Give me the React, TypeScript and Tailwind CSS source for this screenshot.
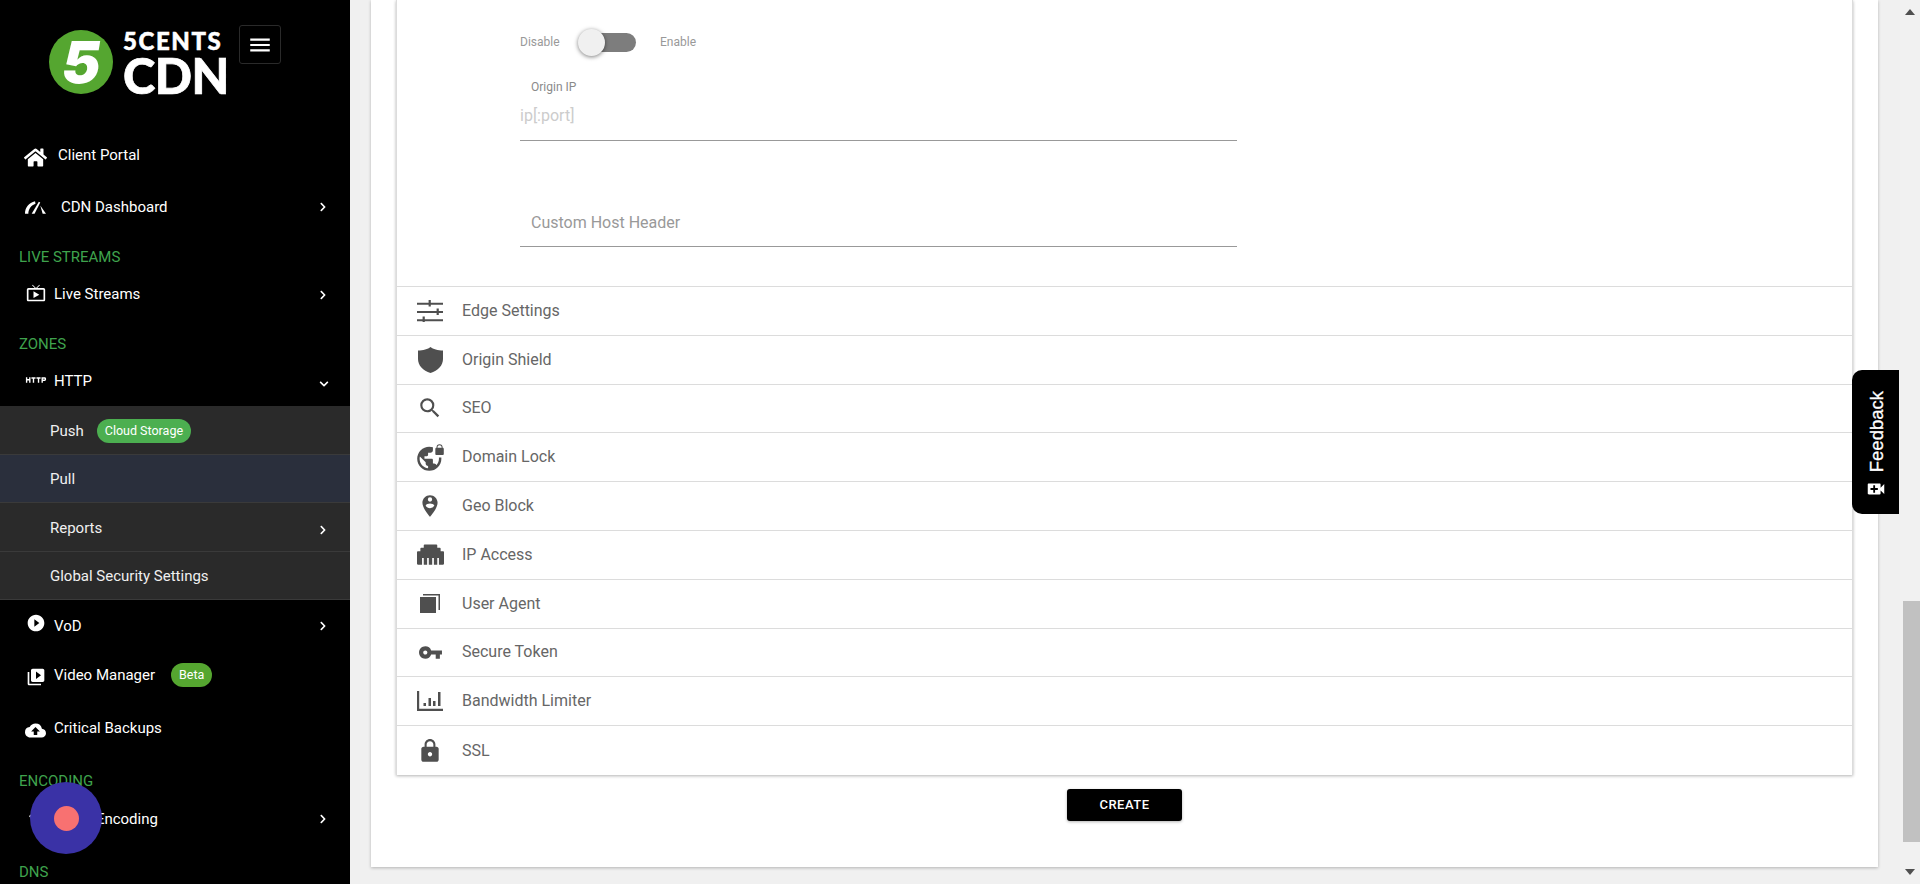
import type { ReactNode } from "react";
import { FaHome, FaEthernet, FaChevronRight, FaChevronDown } from "react-icons/fa";
import {
  MdSearch,
  MdVpnLock,
  MdPersonPinCircle,
  MdVpnKey,
  MdLock,
  MdOutlineLiveTv,
  MdPlayCircleFilled,
  MdVideoLibrary,
  MdCloudUpload,
  MdHttp,
  MdVideoCall,
  MdMenu,
} from "react-icons/md";

function GaugeIcon() {
  return (
    <svg viewBox="0 0 22 13" className="w-[21px] h-[13px]" fill="currentColor">
      <path d="M0 13C0 6.500 4 1.500 10.500 0l.5 2.500C6.500 4 3.500 8 3.500 13z" />
      <path d="M14.500 0.500 16 1.200 10 13H7z" />
      <path d="M16 4.500 22 13h-3.500z" />
    </svg>
  );
}

function TuneIcon() {
  return (
    <svg viewBox="0 0 26 22" className="w-[26px] h-[22px]" fill="currentColor">
      <path d="M0 2.800h26v2H0zM0 11h26v2H0zM0 19.200h26v2H0z" />
      <path d="M11.600 0h2.200v6.500h-2.200zM19.600 8.500h2.200v6.500h-2.200zM5.600 16.500h2.200V22H5.600z" />
    </svg>
  );
}

function ShieldIcon() {
  return (
    <svg viewBox="0 0 25 26" className="w-[25px] h-[26px]" fill="currentColor">
      <path d="M12.500 0C15 2 20 3.500 25 3.500V12C25 18.500 20 23.500 12.500 26 5 23.500 0 18.500 0 12V3.500C5 3.500 10 2 12.500 0z" />
    </svg>
  );
}

function UserAgentIcon() {
  return (
    <svg viewBox="0 0 20 19" className="w-[20px] h-[19px]" fill="currentColor">
      <path d="M0 3h16v16H0z" />
      <path d="M3 0h17v16h-1.500V1.500H3z" />
    </svg>
  );
}

function BandwidthIcon() {
  return (
    <svg viewBox="0 0 26 20" className="w-[26px] h-[20px]" fill="currentColor">
      <path d="M0 0h2.200v17.800H26V20H0z" />
      <path d="M6.500 12h2.500v3H6.500zM11.500 7h2.500v8h-2.500zM16 10h2.500v5H16zM21 1h2.500v14H21z" />
    </svg>
  );
}

function ScrollArrow({ down }: { down?: boolean }) {
  return (
    <svg viewBox="0 0 10 6" className="w-[10px] h-[6px] shrink-0" fill="#505050">
      <path d={down ? "M0 0h10L5 6z" : "M5 0l5 6H0z"} />
    </svg>
  );
}

const panels: { label: string; icon: ReactNode }[] = [
  { label: "Edge Settings", icon: <TuneIcon /> },
  { label: "Origin Shield", icon: <ShieldIcon /> },
  { label: "SEO", icon: <MdSearch size={26} /> },
  { label: "Domain Lock", icon: <MdVpnLock size={29} /> },
  { label: "Geo Block", icon: <MdPersonPinCircle size={26} /> },
  { label: "IP Access", icon: <FaEthernet size={27} /> },
  { label: "User Agent", icon: <UserAgentIcon /> },
  { label: "Secure Token", icon: <MdVpnKey size={25} /> },
  { label: "Bandwidth Limiter", icon: <BandwidthIcon /> },
  { label: "SSL", icon: <MdLock size={26} /> },
];

function NavItem({
  icon,
  label,
  chevron,
  badge,
  textClass = "ml-[9px]",
  className = "",
}: {
  icon: ReactNode;
  label: string;
  chevron?: boolean;
  badge?: ReactNode;
  textClass?: string;
  className?: string;
}) {
  return (
    <div className={`h-[50px] flex items-center pl-[26px] pr-[22px] text-white text-[15px] ${className}`}>
      <span className="w-[19px] flex justify-center [&>svg]:shrink-0">{icon}</span>
      <span className={textClass}>{label}</span>
      {badge}
      {chevron && <FaChevronRight size={10} className="ml-auto" />}
    </div>
  );
}

function SubItem({ label, active, children }: { label: string; active?: boolean; children?: ReactNode }) {
  return (
    <div
      className={`h-[48.5px] flex items-center pl-[50px] pr-[22px] pt-[2px] text-[15px] text-[#f0f0f0] border-b border-[#3a3a3a] ${
        active ? "bg-[#2a2f3c]" : "bg-[#2a2a2a]"
      }`}
    >
      {label}
      {children}
    </div>
  );
}

function SectionLabel({ children, className = "" }: { children: ReactNode; className?: string }) {
  return <div className={`h-6 leading-6 pl-[19px] text-[15px] text-[#3fa34d] ${className}`}>{children}</div>;
}

function Logo() {
  return (
    <div className="h-[130px] flex items-start pl-[49px] pt-[25px]">
      <div className="mt-[5px] w-[64px] h-[64px] rounded-full bg-[#55a630] flex items-center justify-center text-white text-[58px] leading-none font-black italic shrink-0 font-['Inter',sans-serif]">
        5
      </div>
      <div className="ml-[10px] mt-[4px] text-white font-black font-['Lato',sans-serif] w-[106px]">
        <div className="text-[24px] leading-[24px] tracking-[1.6px] [-webkit-text-stroke:0.5px_white]">5CENTS</div>
        <div className="text-[49px] leading-[44px] -tracking-[0.5px] [-webkit-text-stroke:0.7px_white]">CDN</div>
      </div>
      <button className="ml-[10px] w-[42px] h-[39px] rounded-[3px] border border-[#2a2a2a] flex items-center justify-center text-white">
        <MdMenu size={26} />
      </button>
    </div>
  );
}

function Sidebar() {
  return (
    <aside className="w-[350px] shrink-0 bg-black overflow-hidden font-['Roboto',sans-serif]">
      <Logo />
      <NavItem icon={<FaHome size={23} className="mt-1" />} label="Client Portal" textClass="ml-[13px]" />
      <NavItem
        icon={<GaugeIcon />}
        label="CDN Dashboard"
        chevron
        textClass="ml-[16px]"
        className="mt-[2px]"
      />
      <SectionLabel className="mt-[13px]">LIVE STREAMS</SectionLabel>
      <NavItem icon={<MdOutlineLiveTv size={20} className="-mt-1" />} label="Live Streams" chevron className="pt-px" />
      <SectionLabel className="mt-[13px]">ZONES</SectionLabel>
      <NavItem icon={<MdHttp size={22} className="-mt-1" />} label="HTTP" className="pt-px" />
      <div className="relative">
        <FaChevronDown size={10} className="absolute right-[21px] -top-[27px] text-white" />
        <SubItem label="Push">
          <span className="ml-[13px] h-6 px-2 rounded-full bg-[#4caf50] text-white text-[12.5px] leading-6">
            Cloud Storage
          </span>
        </SubItem>
        <SubItem label="Pull" active />
        <SubItem label="Reports">
          <FaChevronRight size={10} className="ml-auto mt-[5px] text-white" />
        </SubItem>
        <SubItem label="Global Security Settings" />
      </div>
      <NavItem icon={<MdPlayCircleFilled size={20} className="-mt-[6px]" />} label="VoD" chevron className="pt-[2px]" />
      <NavItem
        icon={<MdVideoLibrary size={20} className="mt-[3px]" />}
        label="Video Manager"
        badge={
          <span className="ml-4 h-6 px-2 rounded-full bg-[#55a630] text-white text-[12.5px] leading-6">Beta</span>
        }
      />
      <NavItem icon={<MdCloudUpload size={21} className="mt-1" />} label="Critical Backups" className="mt-[3px]" />
      <SectionLabel className="mt-[16px]">ENCODING</SectionLabel>
      <NavItem icon={<FaChevronDown size={16} />} label="Video Encoding" chevron className="mt-px" />
      <SectionLabel className="mt-[16px]">DNS</SectionLabel>
    </aside>
  );
}

function OriginForm() {
  return (
    <div className="h-[287px] pl-[123px] pt-[28px] border-b border-[#dcdcdc]">
      <div className="flex items-center h-7 text-[12px] text-[#999]">
        <span className="w-[59px]">Disable</span>
        <span className="relative w-[57px] h-[19px] rounded-full bg-[#7d7d7d]">
          <span className="absolute -left-px -top-1 w-[27px] h-[27px] rounded-full bg-[#f0f0f0] shadow-[0_1px_4px_rgba(0,0,0,0.5)]" />
        </span>
        <span className="ml-[24px]">Enable</span>
      </div>
      <div className="w-[717px] mt-[23px] h-[62px] border-b border-[#999] pl-[11px] text-[12px] text-[#8a8a8a]">
        <div className="h-[15px] leading-[15px] pt-px">Origin IP</div>
        <div className="mt-[12px] -ml-[11px] text-[16px] leading-[19px] text-[#ccc]">ip[:port]</div>
      </div>
      <div className="w-[717px] mt-[72px] h-[34px] border-b border-[#999] pl-[11px] text-[16px] leading-[19px] text-[#999]">
        Custom Host Header
      </div>
    </div>
  );
}

function SettingsPanels() {
  return (
    <div className="shadow-[0_1px_3px_rgba(0,0,0,0.3)] border-x border-[#dcdcdc] h-[775px]">
      <OriginForm />
      {panels.map((p, i) => (
        <div
          key={p.label}
          className={`h-[48.8px] flex items-center text-[16px] text-[#666] ${
            i < panels.length - 1 ? "border-b border-[#dcdcdc]" : ""
          }`}
        >
          <span className="ml-[19px] w-[28px] flex justify-center text-[#4f4f4f] shrink-0 [&>svg]:shrink-0">
            {p.icon}
          </span>
          <span className="ml-[18px]">{p.label}</span>
        </div>
      ))}
    </div>
  );
}

function Scrollbar() {
  return (
    <div className="w-5 shrink-0 bg-[#f1f1f1] flex flex-col items-center">
      <div className="h-[9px] shrink-0" />
      <ScrollArrow />
      <div className="h-[586px] shrink-0" />
      <div className="w-[17px] h-[241px] ml-[2px] bg-[#c1c1c1] shrink-0" />
      <div className="h-[27px] shrink-0" />
      <ScrollArrow down />
    </div>
  );
}

export default function App() {
  return (
    <div className="relative flex h-screen overflow-hidden font-['Roboto',sans-serif]">
      <Sidebar />
      <main className="flex-1 bg-[#f0f0f0] pl-[21px] pr-[22px] overflow-hidden">
        <div className="h-[867px] bg-white px-[25px] shadow-[0_1px_3px_rgba(0,0,0,0.25)]">
          <SettingsPanels />
          <div className="flex justify-center mt-[14px]">
            <button className="w-[115px] h-8 rounded-[3px] bg-black text-white text-[13px] font-medium tracking-[0.5px] shadow-[0_1px_3px_rgba(0,0,0,0.3)]">
              CREATE
            </button>
          </div>
        </div>
      </main>
      <Scrollbar />

      {/* feedback tab */}
      <div className="absolute left-[1852px] top-[370px] w-[47px] h-[144px] bg-black rounded-l-[10px] text-white flex flex-col-reverse items-center pb-[14px] gap-[6px] font-['Liberation_Sans',sans-serif]">
        <MdVideoCall size={22} />
        <span className="ml-[3px] [writing-mode:vertical-rl] rotate-180 text-[18.5px] leading-none [-webkit-text-stroke:0.3px_white]">
          Feedback
        </span>
      </div>

      {/* recorder button */}
      <div className="absolute left-[30px] top-[782px] w-[72px] h-[72px] rounded-full bg-[#3a32a6] flex items-center justify-center">
        <span className="w-[25px] h-[25px] rounded-full bg-[#f87171]" />
      </div>
    </div>
  );
}
